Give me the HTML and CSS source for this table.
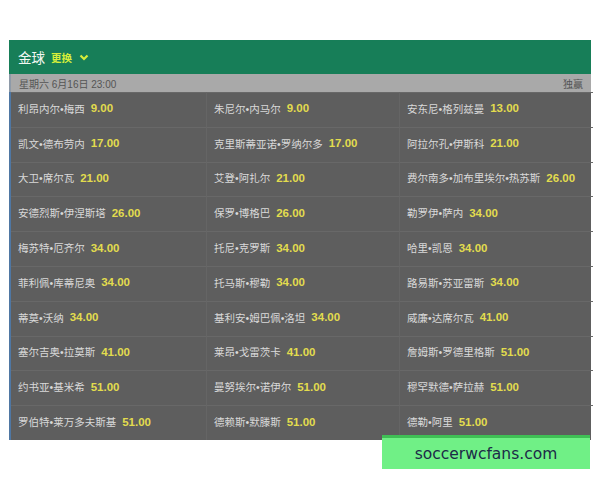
FILE: index.html
```html
<!DOCTYPE html>
<html lang="zh">
<head>
<meta charset="utf-8">
<link rel="stylesheet" href="styles.css">
</head>
<body>
<div class="page">
  <div class="panel">
    <div class="head">
      <span class="title">金球</span>
      <span class="switch">更换</span>
      <svg class="chev" width="10" height="7" viewBox="0 0 10 7"><path d="M1.5 1.5 L5 5 L8.5 1.5" fill="none" stroke="#d6ee3a" stroke-width="2.2"/></svg>
    </div>
    <div class="datebar"><span>星期六 6月16日 23:00</span><span>独赢</span></div>
    <div class="grid">
      <div class="cell">利昂内尔•梅西<b>9.00</b></div>
      <div class="cell">朱尼尔•内马尔<b>9.00</b></div>
      <div class="cell">安东尼•格列兹曼<b>13.00</b></div>
      <div class="cell">凯文•德布劳内<b>17.00</b></div>
      <div class="cell">克里斯蒂亚诺•罗纳尔多<b>17.00</b></div>
      <div class="cell">阿拉尔孔•伊斯科<b>21.00</b></div>
      <div class="cell">大卫•席尔瓦<b>21.00</b></div>
      <div class="cell">艾登•阿扎尔<b>21.00</b></div>
      <div class="cell">费尔南多•加布里埃尔•热苏斯<b>26.00</b></div>
      <div class="cell">安德烈斯•伊涅斯塔<b>26.00</b></div>
      <div class="cell">保罗•博格巴<b>26.00</b></div>
      <div class="cell">勒罗伊•萨内<b>34.00</b></div>
      <div class="cell">梅苏特•厄齐尔<b>34.00</b></div>
      <div class="cell">托尼•克罗斯<b>34.00</b></div>
      <div class="cell">哈里•凯恩<b>34.00</b></div>
      <div class="cell">菲利佩•库蒂尼奥<b>34.00</b></div>
      <div class="cell">托马斯•穆勒<b>34.00</b></div>
      <div class="cell">路易斯•苏亚雷斯<b>34.00</b></div>
      <div class="cell">蒂莫•沃纳<b>34.00</b></div>
      <div class="cell">基利安•姆巴佩•洛坦<b>34.00</b></div>
      <div class="cell">威廉•达席尔瓦<b>41.00</b></div>
      <div class="cell">塞尔吉奥•拉莫斯<b>41.00</b></div>
      <div class="cell">莱昂•戈雷茨卡<b>41.00</b></div>
      <div class="cell">詹姆斯•罗德里格斯<b>51.00</b></div>
      <div class="cell">约书亚•基米希<b>51.00</b></div>
      <div class="cell">曼努埃尔•诺伊尔<b>51.00</b></div>
      <div class="cell">穆罕默德•萨拉赫<b>51.00</b></div>
      <div class="cell">罗伯特•莱万多夫斯基<b>51.00</b></div>
      <div class="cell">德赖斯•默滕斯<b>51.00</b></div>
      <div class="cell">德勒•阿里<b>51.00</b></div>
    </div>
  </div>
  <div class="mark">soccerwcfans.com</div>
</div>
</body>
</html>
```

FILE: styles.css
```css
html, body {
  margin: 0;
  padding: 0;
  background: #ffffff;
}
.page {
  position: relative;
  width: 600px;
  height: 480px;
  padding-top: 40px;
  box-sizing: border-box;
}
.panel {
  margin-left: 9px;
  width: 582px;
  font-family: "Liberation Sans", "Noto Sans CJK SC", sans-serif;
}
.head {
  height: 34px;
  background: #177e58;
  display: flex;
  align-items: center;
  padding-left: 9px;
  gap: 6px;
}
.title {
  color: #f2f7f2;
  font-size: 13.5px;
}
.switch {
  color: #d6ee3a;
  font-size: 10.5px;
  font-weight: bold;
}
.chev {
  margin-left: 1px;
  margin-top: 1px;
}
.datebar {
  height: 18px;
  background: #a9a9a9;
  display: flex;
  justify-content: space-between;
  align-items: center;
  padding: 0 8px 0 8px;
  font-size: 10px;
  color: #555555;
  border-left: 2px solid #8e9aa8;
}
.grid {
  display: grid;
  grid-template-columns: 196px 193px 193px;
  grid-auto-rows: 34.8px;
  background: #5e5e5e;
  border-left: 2px solid #4f77a3;
}
.cell {
  display: flex;
  align-items: center;
  padding: 0 0 3px 7px;
  color: #d9d9d9;
  font-size: 10.5px;
  border-top: 1px solid #686868;
  border-right: 1px solid #656565;
  white-space: nowrap;
  box-sizing: border-box;
}
.cell b {
  color: #e2dc4e;
  font-weight: bold;
  font-size: 11.5px;
  margin-left: 6px;
}
.cell:nth-child(3n) {
  border-right: none;
}
.mark {
  position: absolute;
  left: 382px;
  top: 435px;
  width: 208px;
  height: 34px;
  box-sizing: border-box;
  background: #70f086;
  border-top: 3px solid #3fbf55;
  color: #1c2b48;
  font-family: "DejaVu Sans", sans-serif;
  font-size: 15.5px;
  display: flex;
  align-items: center;
  justify-content: center;
}
```
